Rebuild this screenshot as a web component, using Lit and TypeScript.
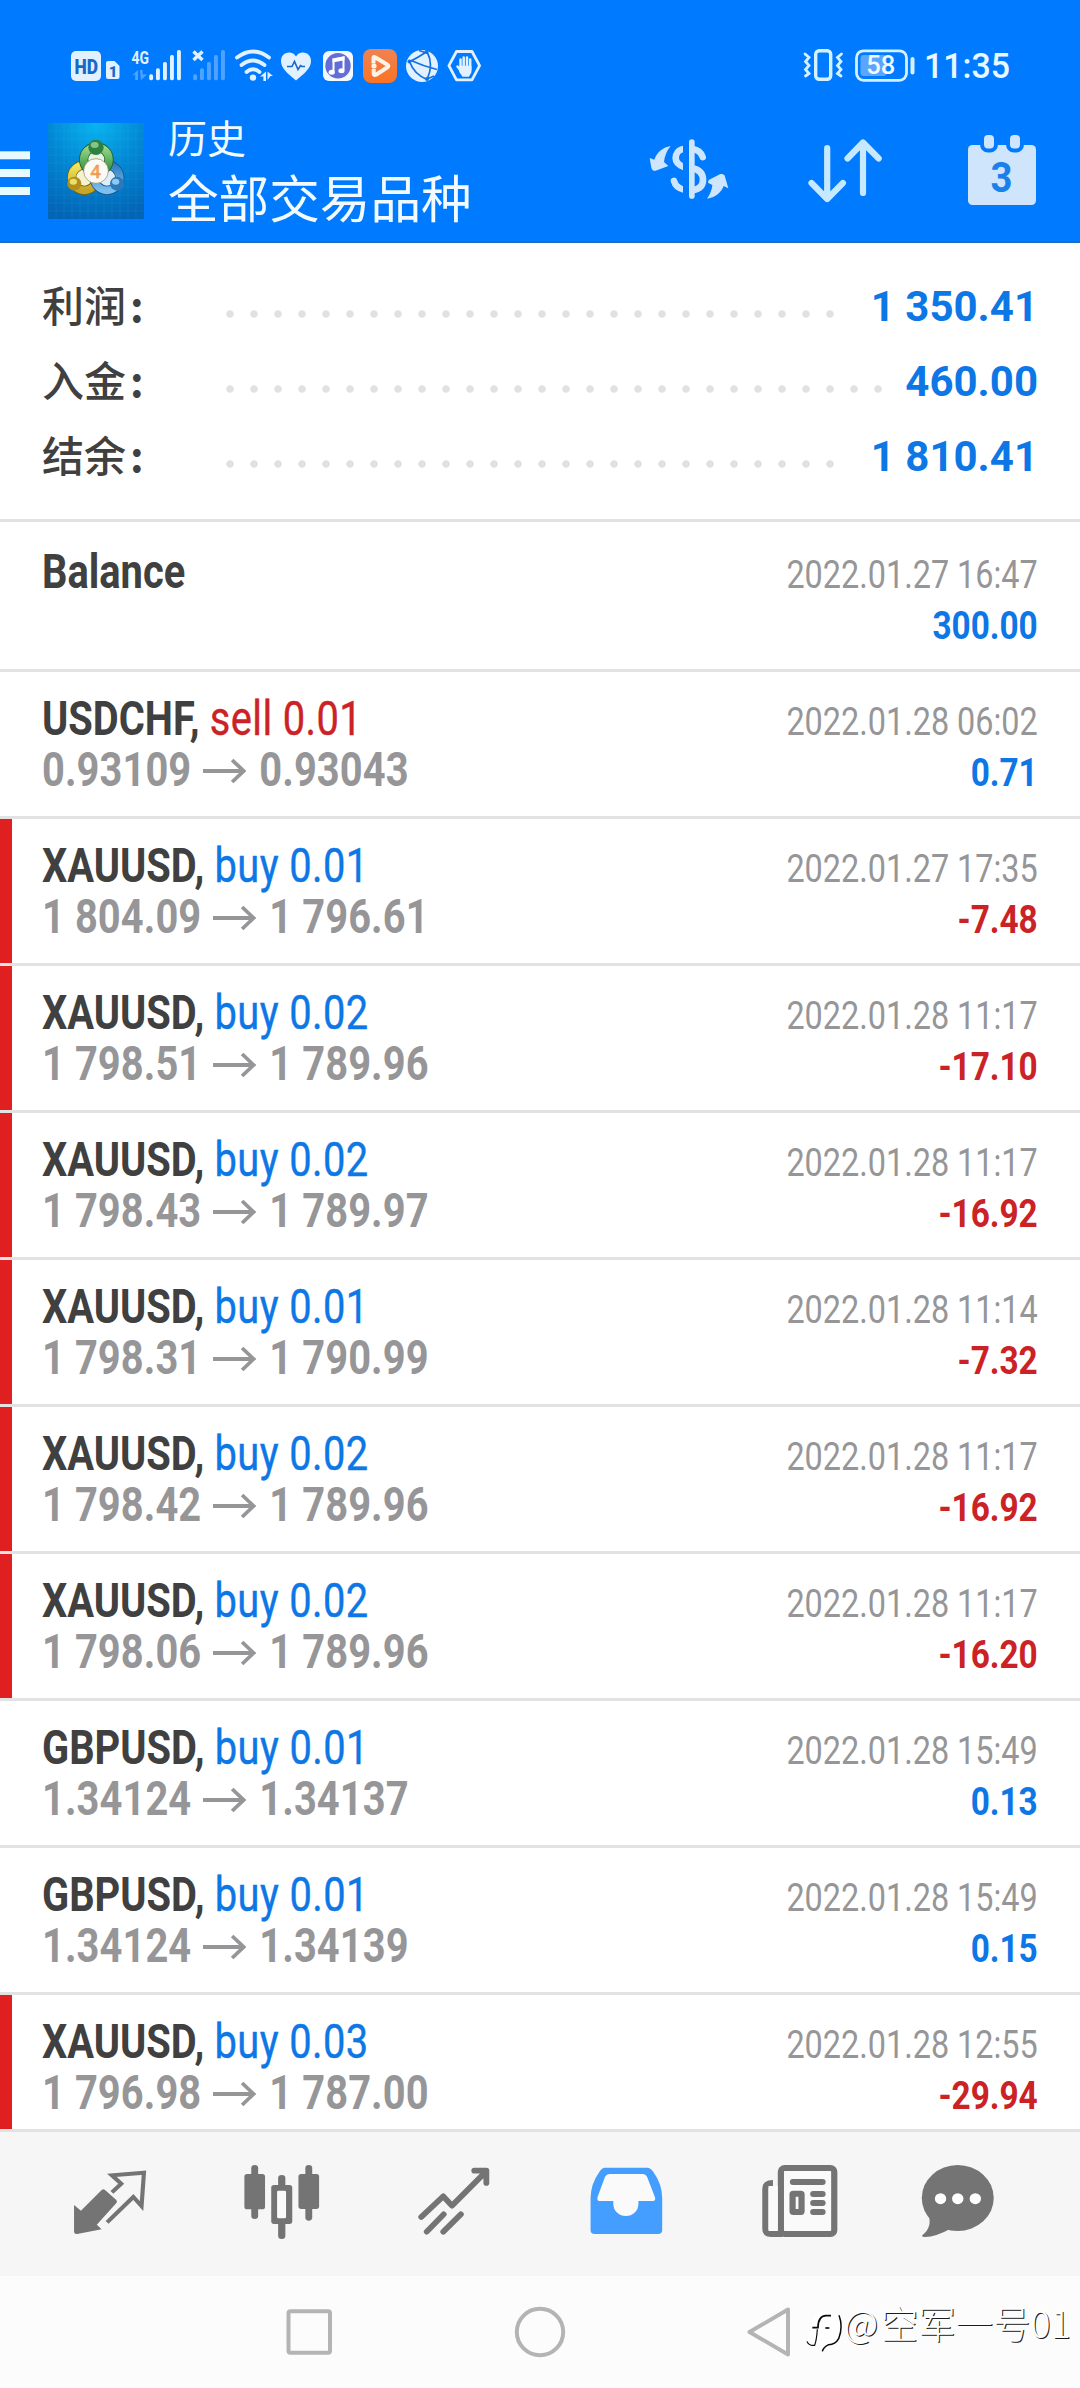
import { LitElement, html, svg, css, nothing } from "lit";
import { customElement, property } from "lit/decorators.js";
import { classMap } from "lit/directives/class-map.js";

interface Deal {
  symbol: string;
  side?: "buy" | "sell";
  volume?: string;
  open?: string;
  close?: string;
  time: string;
  profit: string;
}

const DEALS: Deal[] = [
  { symbol: "Balance", time: "2022.01.27 16:47", profit: "300.00" },
  { symbol: "USDCHF", side: "sell", volume: "0.01", open: "0.93109", close: "0.93043", time: "2022.01.28 06:02", profit: "0.71" },
  { symbol: "XAUUSD", side: "buy", volume: "0.01", open: "1 804.09", close: "1 796.61", time: "2022.01.27 17:35", profit: "-7.48" },
  { symbol: "XAUUSD", side: "buy", volume: "0.02", open: "1 798.51", close: "1 789.96", time: "2022.01.28 11:17", profit: "-17.10" },
  { symbol: "XAUUSD", side: "buy", volume: "0.02", open: "1 798.43", close: "1 789.97", time: "2022.01.28 11:17", profit: "-16.92" },
  { symbol: "XAUUSD", side: "buy", volume: "0.01", open: "1 798.31", close: "1 790.99", time: "2022.01.28 11:14", profit: "-7.32" },
  { symbol: "XAUUSD", side: "buy", volume: "0.02", open: "1 798.42", close: "1 789.96", time: "2022.01.28 11:17", profit: "-16.92" },
  { symbol: "XAUUSD", side: "buy", volume: "0.02", open: "1 798.06", close: "1 789.96", time: "2022.01.28 11:17", profit: "-16.20" },
  { symbol: "GBPUSD", side: "buy", volume: "0.01", open: "1.34124", close: "1.34137", time: "2022.01.28 15:49", profit: "0.13" },
  { symbol: "GBPUSD", side: "buy", volume: "0.01", open: "1.34124", close: "1.34139", time: "2022.01.28 15:49", profit: "0.15" },
  { symbol: "XAUUSD", side: "buy", volume: "0.03", open: "1 796.98", close: "1 787.00", time: "2022.01.28 12:55", profit: "-29.94" },
];

const SUMMARY = [
  { label: "利润", value: "1 350.41", dots: 26 },
  { label: "入金", value: "460.00", dots: 28 },
  { label: "结余", value: "1 810.41", dots: 26 },
];

@customElement("status-bar")
export class StatusBar extends LitElement {
  static styles = css`
    :host { display: flex; height: 96px; padding-top: 36px; box-sizing: border-box; justify-content: space-between; }
    svg { display: block; flex: none; }
    .left { margin-left: 66px; }
    .right { margin-right: 66px; }
    text { font-family: Roboto, sans-serif; }
  `;
  render() {
    const bars = [[149.2, 74.3], [156, 68.3], [163, 62], [170, 55], [177, 50]];
    return html`
      <svg class="left" width="420" height="60" viewBox="66 36 420 60">
        <g fill="#e2f1ff">
          <rect x="71" y="51" width="30" height="30" rx="5" />
          <path d="M108 61h6.500l5 5v11q0 2-2 2h-9.500q-2 0-2-2v-14q0-2 2-2z" />
          <text x="131.500" y="63.500" font-size="19" font-weight="700" textLength="17.500" lengthAdjust="spacingAndGlyphs">4G</text>
          ${bars.map(([x, y]) => svg`<rect x=${x} y=${y} width="3.900" height=${80.2 - y} rx="1.600"/>`)}
          <g opacity=".35">
            ${bars.map(([x, y]) => svg`<rect x=${x + 44} y=${y} width="3.900" height=${80.2 - y} rx="1.600"/>`)}
            <path d="M132 75.500l6-5.500v10h-2.800v-5.500zM140 70l2.500 0v4.500h4.500l-6 5.500z" />
          </g>
        </g>
        <path d="M193.500 51.500l9 8.500m0-8.500l-9 8.500" stroke="#e2f1ff" stroke-width="3.400" />
        <text x="74.500" y="73.500" font-size="20.500" font-weight="900" fill="#1769c9" textLength="23.500" lengthAdjust="spacingAndGlyphs">HD</text>
        <text x="108.700" y="76.500" font-size="15" font-weight="900" fill="#1769c9">1</text>
        <g fill="none" stroke="#e2f1ff" stroke-width="3.800" stroke-linecap="round">
          <path d="M237 57.500q16-12 32 0M241.500 65q11.500-9 23 0M246.500 72q6.500-5.500 13 0" />
        </g>
        <circle cx="253" cy="77.600" r="3.200" fill="#e2f1ff" />
        <path d="M260 76.500l6-5v9.500h-2.600v-4.500zM267.500 71.500l5.500 4.500h-2.500l-3 4z" fill="#e2f1ff" />
        <path d="M296 80.500C287 73 281 68 281 61c0-5 3.500-8.500 8-8.500 3 0 5.500 1.500 7 4 1.500-2.500 4-4 7-4 4.500 0 8 3.500 8 8.500 0 7-6 12-15 19.500z" fill="#e2f1ff" />
        <path d="M287 66.500h5l2.500-5 3.500 8 2.500-4 1.500 1h3" fill="none" stroke="#1769c9" stroke-width="1.600" />
        <rect x="323" y="51" width="30" height="30" rx="6" fill="#f4f9ff" />
        <circle cx="338" cy="65.800" r="12.700" fill="#626dd6" />
        <path d="M333.500 72v-12.500l10-2v12.500" fill="none" stroke="#fff" stroke-width="2" />
        <path d="M332.500 58.500l12-2.200v4l-12 2.200z" fill="#fff" />
        <ellipse cx="331.700" cy="72.300" rx="3.100" ry="2.500" fill="#fff" />
        <ellipse cx="341.500" cy="70.800" rx="3.100" ry="2.500" fill="#fff" />
        <rect x="363" y="49" width="34" height="34" rx="8" fill="url(#orange)" />
        <defs><linearGradient id="orange" x1="0" y1="0" x2="0" y2="1"><stop offset="0" stop-color="#ef8352" /><stop offset="1" stop-color="#fb7224" /></linearGradient></defs>
        <path d="M373.500 63.500V58q0-1.500 1.500-.8l12.500 7.600q1.600 1.200 0 2.400l-11.500 7.500q-2 .8-2.300-1V69" fill="none" stroke="#fff2e6" stroke-width="4" stroke-linejoin="round" />
        <circle cx="374" cy="66" r="2.600" fill="#fff2e6" />
        <circle cx="422" cy="66" r="16" fill="#e2f1ff" />
        <g fill="none" stroke="#1570e0" stroke-width="1.700">
          <path d="M410 61.500Q419 57 427 51.500M410 62.500Q414 74 427 79.500M411 60.500Q423 66 437 69.500M427 51.500Q434 65 427 79.500M419 50.500L427 53M427 79L434 76" />
        </g>
        <circle cx="426.500" cy="52" r="2" fill="#0f74ea" />
        <circle cx="409.500" cy="61.500" r="2" fill="#0f74ea" />
        <circle cx="427" cy="79" r="2" fill="#0f74ea" />
        <path d="M456.500 51.500h15.500l7.600 14.200-7.600 14.200h-15.500l-7.600-14.200z" fill="none" stroke="#e2f1ff" stroke-width="2.800" stroke-linejoin="round" />
        <g stroke="#e2f1ff" stroke-width="2.500" stroke-linecap="round">
          <path d="M460.500 59.500v10M463.700 57.500v10M467 57.500v10M470.200 59.500v10M457.500 66.500l4.500 6" />
          <path d="M460.500 67h9.700v5l-2 3.500h-5l-2.700-4z" fill="#e2f1ff" />
        </g>
      </svg>
      <svg class="right" width="230" height="60" viewBox="784 36 230 60">
        <g fill="none" stroke="#d4f1ff" stroke-linecap="round">
          <rect x="815.700" y="50.700" width="15" height="28.500" rx="3.500" stroke-width="3.400" />
          <path d="M805 54l4 3.500-3.500 4 3.500 4-3.500 4 3.500 4-3.500 2.500M841.500 54l-4 3.500 3.500 4-3.500 4 3.500 4-3.500 4 3.500 2.500" stroke-width="2.800" />
          <rect x="856.500" y="50.800" width="50" height="29.500" rx="7" stroke-width="2.800" />
          <path d="M912.500 59v13.500" stroke-width="4" />
        </g>
        <rect x="860.500" y="55" width="26" height="21" rx="3" fill="#5ba5fd" />
        <text x="880.700" y="74.300" font-size="25.500" font-weight="500" fill="#f2faff" text-anchor="middle">58</text>
        <text x="924" y="78" font-size="34.500" font-weight="500" fill="#e9f7ff" textLength="86" lengthAdjust="spacingAndGlyphs">11:35</text>
      </svg>
    `;
  }
}

@customElement("title-bar")
export class TitleBar extends LitElement {
  static styles = css`
    :host { display: flex; align-items: flex-start; height: 145px; box-sizing: border-box; }
    svg { display: block; flex: none; }
    .menu { margin-top: 55px; }
    .logo { margin: 27px 0 0 18px; }
    .titles { margin-left: 24px; color: #f1fbff; font-family: "Noto Sans CJK SC", sans-serif; white-space: nowrap; }
    .name { font-size: 39px; line-height: 60px; margin-top: 10px; }
    .scope { font-size: 50.600px; line-height: 60px; }
    .actions { margin-left: auto; margin-right: 36px; margin-top: 24px; display: flex; gap: 68px; }
    .digit { font-family: Roboto, sans-serif; }
  `;
  render() {
    return html`
      <svg class="menu" width="30" height="44" viewBox="0 151 30 44" fill="#e6fbff">
        <rect y="151.300" width="30" height="8" /><rect y="169" width="30" height="8" /><rect y="187" width="30" height="8" />
      </svg>
      <svg class="logo" width="96" height="96" viewBox="0 0 288 288">
        <defs>
          <radialGradient id="bg" cx=".5" cy="0" r="1"><stop offset="0" stop-color="#08b4f0" /><stop offset=".5" stop-color="#0287d4" /><stop offset="1" stop-color="#0365b6" /></radialGradient>
          <linearGradient id="gr" x1="0" y1="0" x2="0" y2="1"><stop offset="0" stop-color="#9bd886" /><stop offset="1" stop-color="#2c8c42" /></linearGradient>
          <linearGradient id="ye" x1="0" y1="0" x2="0" y2="1"><stop offset="0" stop-color="#f2e65e" /><stop offset="1" stop-color="#c8a526" /></linearGradient>
          <linearGradient id="bl" x1="0" y1="0" x2="0" y2="1"><stop offset="0" stop-color="#2f7fc0" /><stop offset="1" stop-color="#7cc0f0" /></linearGradient>
        </defs>
        <rect width="288" height="288" fill="url(#bg)" />
        <path d="M24 0V288M48 0V288M72 0V288M96 0V288M120 0V288M144 0V288M168 0V288M192 0V288M216 0V288M240 0V288M264 0V288M0 24H288M0 48H288M0 72H288M0 96H288M0 120H288M0 144H288M0 168H288M0 192H288M0 216H288M0 240H288M0 264H288" stroke="#4ccbf5" stroke-opacity=".22" stroke-width="1.500" />
        <circle cx="109" cy="164" r="38" fill="#f4f2d0" stroke="#6f6415" stroke-width="28" />
        <circle cx="109" cy="164" r="38" fill="none" stroke="url(#ye)" stroke-width="23" />
        <circle cx="177" cy="164" r="38" fill="#dceefa" stroke="#1c5488" stroke-width="28" />
        <circle cx="177" cy="164" r="38" fill="none" stroke="url(#bl)" stroke-width="23" />
        <circle cx="145" cy="110" r="38" fill="#e4f5e0" stroke="#1a5c30" stroke-width="28" />
        <circle cx="145" cy="110" r="38" fill="none" stroke="url(#gr)" stroke-width="23" />
        <circle cx="144" cy="73" r="23" fill="#2f8043" /><ellipse cx="140" cy="66" rx="12" ry="9" fill="#86c584" />
        <circle cx="79" cy="182" r="21" fill="#b0901b" /><ellipse cx="76" cy="176" rx="11" ry="9" fill="#efdd6c" />
        <circle cx="207" cy="182" r="21" fill="#3079b9" /><ellipse cx="203" cy="176" rx="11" ry="9" fill="#8bcaf2" />
        <circle cx="144" cy="144" r="37" fill="#fbfaf5" stroke="#96854e" stroke-width="2" />
        <text class="digit" x="143" y="164" text-anchor="middle" font-size="56" font-weight="500" fill="#f4a75c" stroke="#ee8f3a" stroke-width="1">4</text>
      </svg>
      <div class="titles">
        <div class="name">历史</div>
        <div class="scope">全部交易品种</div>
      </div>
      <div class="actions">
        <svg width="88" height="100" viewBox="645 120 88 100">
          <g transform="translate(640 120) scale(.33333)">
            <g fill="#cde6fd">
              <path d="M95 78C72 82 54 96 46 119L32 114L37 143Q40 154 50 152L88 138L75 126Q78 98 95 78z" />
              <path d="M204 236C213 224 219 209 220 195L207 188L209 180L244 162Q256 160 258 170L268 205L254 198C246 219 228 233 204 236z" />
            </g>
            <g fill="none" stroke="#cde6fd" stroke-width="20" stroke-linecap="round">
              <path d="M191 111C187 96 176 89 159 86M134 87C118 89 110 102 110 114C110 128 120 136 137 142M159 144C182 149 192 162 192 179C192 198 180 208 159 211M105 183C109 198 120 206 136 209" />
            </g>
            <path d="M132 70h18v160h-18z" fill="#007aff" />
            <path d="M158.500 66v162" stroke="#cde6fd" stroke-width="17" stroke-linecap="round" />
          </g>
        </svg>
        <svg width="88" height="100" viewBox="801 120 88 100" fill="none" stroke="#c6e9ff" stroke-width="6.200" stroke-linecap="round" stroke-linejoin="round">
          <path d="M828.200 148v50.500M812.500 183l15.700 16 15.700-16M864 193v-50.500M848.500 158.500l15.500-16 15.700 16" />
        </svg>
        <svg width="88" height="100" viewBox="956 120 88 100">
          <rect x="968" y="145" width="68" height="60" rx="4.500" fill="#cfe5fc" />
          <g fill="#cfe5fc" stroke="#007aff" stroke-width="8" paint-order="stroke">
            <rect x="984" y="135" width="10" height="13.500" rx="4" /><rect x="1010" y="135" width="10" height="13.500" rx="4" />
          </g>
          <text class="digit" x="1001.500" y="192" text-anchor="middle" font-size="42.500" font-weight="700" fill="#1a80ea" textLength="22" lengthAdjust="spacingAndGlyphs">3</text>
        </svg>
      </div>
    `;
  }
}

@customElement("account-summary")
export class AccountSummary extends LitElement {
  static styles = css`
    :host { display: block; height: 279px; box-sizing: border-box; padding: 27px 42px 0 42px; border-bottom: 3px solid #e2e2e2; }
    .row { display: flex; align-items: flex-start; height: 75px; }
    .label { width: 176px; font: 500 42px/68px "Noto Sans CJK SC", sans-serif; color: #404040; }
    .colon { margin-left: 4px; font-weight: 700; }
    .dots { height: 8px; margin-top: 39.500px; background: radial-gradient(circle at center, #e1e1e3 3.300px, transparent 4.200px) 0 0 / 24px 8px repeat-x; }
    .value { margin-left: auto; font: 700 42px/73px Roboto, sans-serif; color: #0d77e6; white-space: pre; }
  `;
  render() {
    return SUMMARY.map((s) => html`
      <div class="row">
        <div class="label">${s.label}<span class="colon">:</span></div>
        <div class="dots" style="width:${s.dots * 24}px"></div>
        <div class="value">${s.value}</div>
      </div>`);
  }
}

@customElement("deal-row")
export class DealRow extends LitElement {
  @property({ attribute: false }) deal!: Deal;
  static styles = css`
    :host { display: block; height: 147px; box-sizing: border-box; border-top: 3px solid #e2e2e2; }
    :host([first]) { border-top-color: transparent; }
    .row { display: flex; justify-content: space-between; height: 144px; box-sizing: border-box; padding: 21px 42px 0 30px; border-left: 12px solid transparent; font-family: Roboto, sans-serif; white-space: nowrap; }
    .row.loss { border-left-color: #e01f20; }
    .main { transform: scaleX(0.83); transform-origin: 0 0; font-size: 48px; line-height: 51px; }
    .symbol { font-weight: 700; color: #404040; }
    .buy, .sell { letter-spacing: 0.5px; margin-left: 0.5px; -webkit-text-stroke: 0.4px; }
    .buy, .gain { color: #0d77e6; }
    .sell, .neg { color: #cb2226; }
    .prices { display: flex; align-items: center; font-weight: 700; color: #969698; letter-spacing: 0.1px; }
    .arrow { margin: 2px 16px 0 14px; }
    .side { text-align: right; font-size: 39.400px; line-height: 51px; padding-top: 3px; }
    .time { color: #969698; transform: scaleX(0.822); transform-origin: 100% 0; }
    .profit { font-weight: 700; font-size: 39px; margin-top: 1px; transform: scaleX(0.855); transform-origin: 100% 0; }
  `;
  render() {
    const d = this.deal;
    const loss = d.profit.startsWith("-");
    return html`
      <div class=${classMap({ row: true, loss })}>
        <div class="main">
          <div>
            <span class="symbol">${d.symbol}${d.side ? "," : ""}</span>
            ${d.side ? html`<span class=${d.side}>${d.side} ${d.volume}</span>` : nothing}
          </div>
          ${d.open
            ? html`<div class="prices">
                <span>${d.open}</span>
                <svg class="arrow" width="52" height="26" viewBox="0 0 43 26" preserveAspectRatio="none" fill="none" stroke="#969698" stroke-width="3.800"><path d="M0 13h41M29 2l11.500 11-11.500 11" /></svg>
                <span>${d.close}</span>
              </div>`
            : nothing}
        </div>
        <div class="side">
          <div class="time">${d.time}</div>
          <div class=${classMap({ profit: true, neg: loss, gain: !loss })}>${d.profit}</div>
        </div>
      </div>
    `;
  }
}

@customElement("tab-bar")
export class TabBar extends LitElement {
  static styles = css`
    :host { display: flex; height: 147px; box-sizing: border-box; border-top: 3px solid #e2e2e2; background: #f6f6f6; padding: 11px 64px 0 58px; justify-content: space-between; }
    svg { display: block; flex: none; }
  `;
  render() {
    const L = "translate(0 1980) scale(.3444 .33333)";
    const R = "translate(540 1980) scale(.3444 .33333)";
    return html`
      <svg width="104" height="116" viewBox="58 2143 104 116"><g transform=${L} fill="#747474">
        <path d="M215 675L235 692L293 632Q299 624 305 630L337 659Q342 664 338 669L281 734L295 748L224 762Q215 763 215 755z" />
        <path d="M325 637L352 611L325 586L418 578L411 678L387 651L311 727" fill="none" stroke="#747474" stroke-width="12" />
      </g></svg>
      <svg width="104" height="116" viewBox="228.800 2143 104 116"><g transform=${L} fill="#747474">
        <rect x="709" y="582" width="60" height="106" rx="8" /><rect x="729" y="555" width="20" height="162" rx="10" />
        <rect x="866" y="582" width="60" height="105" rx="8" /><rect x="886" y="555" width="20" height="167" rx="10" />
        <rect x="807" y="585" width="21" height="192" rx="10" /><rect x="787" y="615" width="61" height="117" rx="8" />
        <rect x="804" y="632" width="26" height="83" rx="4" fill="#fbfbfb" />
      </g></svg>
      <svg width="104" height="116" viewBox="399.600 2143 104 116"><g transform=${L} fill="none" stroke="#747474" stroke-width="17" stroke-linecap="round" stroke-linejoin="round">
        <path d="M1222 711L1286 649L1311 677L1408 577M1376 572H1411V609M1238 755L1287 703M1286 755L1337 703" />
      </g></svg>
      <svg width="104" height="116" viewBox="570.400 2143 104 116"><g transform=${R}>
        <path d="M192 582H308L336 655V664H168V655z M214 660H287V708H214z" fill="#fafafa" />
        <path fill-rule="evenodd" fill="#439eff" d="M190 563H312Q322 563 330 575Q356 612 356 655V750Q356 762 344 762H160Q148 762 148 750V655Q148 612 174 575Q181 563 190 563zM203 582Q194 582 190 590L168 652Q166 663 174 663H214V672A36.500 36 0 0 0 287 672V663H329Q338 663 335 652L312 590Q308 582 300 582z" />
      </g></svg>
      <svg width="104" height="116" viewBox="741.200 2143 104 116"><g transform=${R} fill="none" stroke="#747474" stroke-width="18" stroke-linecap="round">
        <rect x="700" y="564" width="155" height="198" rx="11" fill="#fafafa" />
        <path d="M677 609Q655 609 655 626V746Q655 762 672 762H705" stroke-linecap="butt" />
        <path d="M664 618H691V753H664z" fill="#fafafa" stroke="none" />
        <path d="M735 606H821M794 642H821M794 669H821M794 696H821" />
        <rect x="734" y="641" width="26" height="55" rx="2" />
      </g></svg>
      <svg width="104" height="116" viewBox="912 2143 104 116"><g transform=${R} fill="#747474">
        <ellipse cx="1213" cy="654" rx="104.500" ry="99" />
        <path d="M1126 700Q1142 740 1110 766Q1108 772 1118 771Q1150 770 1192 746z" />
        <g fill="#fff"><circle cx="1163" cy="656" r="16.500" /><circle cx="1213" cy="656" r="16.500" /><circle cx="1264" cy="656" r="16.500" /></g>
      </g></svg>
    `;
  }
}

@customElement("nav-bar")
export class NavBar extends LitElement {
  static styles = css`
    :host { display: flex; position: relative; height: 112px; background: #fcfcfc; justify-content: center; gap: 171px; align-items: center; }
    svg { display: block; flex: none; }
    .mark { position: absolute; left: 806px; top: 14px; display: flex; align-items: flex-start; }
    .user { font: 300 37.500px/64px "Noto Sans CJK SC", sans-serif; color: #fff; text-shadow: 1px 1px 0.500px #1c1c1c; margin-left: 0; white-space: nowrap; }
    .at { letter-spacing: 2.500px; }
  `;
  render() {
    return html`
      <svg width="60" height="60" viewBox="279 2302 60 60" fill="none" stroke="#b4b4b4" stroke-width="4"><rect x="288.500" y="2311.300" width="41.500" height="41.500" rx="2" /></svg>
      <svg width="60" height="60" viewBox="510 2302 60 60" fill="none" stroke="#b4b4b4" stroke-width="4"><circle cx="540" cy="2332" r="23.200" /></svg>
      <svg width="60" height="60" viewBox="741 2302 60 60" fill="none" stroke="#b4b4b4" stroke-width="4" stroke-linejoin="round"><path d="M749.500 2332L788 2309.500V2354.500z" /></svg>
      <div class="mark">
        <svg width="38" height="66" viewBox="48 0 114 198" fill="none">
          <path d="M62 110Q62 66 108 66Q152 66 152 110Q152 150 118 164L96 182V160L54 160z" fill="#fff" />
          <g stroke="#0a0a0a">
            <path d="M67 113H84Q84 78 108 77H123" stroke-width="5" />
            <path d="M51 154Q56 168 74 166Q80 150 82 118" stroke-width="3.500" />
            <path d="M106 114H118" stroke-width="5" />
            <path d="M147 76Q160 110 146 146Q136 164 116 164Q100 172 97 184" stroke-width="4.500" />
          </g>
        </svg>
        <span class="user"><span class="at">@</span>空军一号01</span>
      </div>
    `;
  }
}

@customElement("app-root")
export class AppRoot extends LitElement {
  static styles = css`
    :host { display: flex; flex-direction: column; width: 1080px; height: 2388px; background: #fff; overflow: hidden; }
    .header { background: #007aff; height: 243px; box-sizing: border-box; border-bottom: 2px solid #1a6fc4; flex: none; }
    .list { flex: 1; min-height: 0; overflow: hidden; }
    account-summary, tab-bar, nav-bar { flex: none; }
  `;
  render() {
    return html`
      <div class="header"><status-bar></status-bar><title-bar></title-bar></div>
      <account-summary></account-summary>
      <div class="list">${DEALS.map((d, i) => html`<deal-row .deal=${d} ?first=${i === 0}></deal-row>`)}</div>
      <tab-bar></tab-bar>
      <nav-bar></nav-bar>
    `;
  }
}
